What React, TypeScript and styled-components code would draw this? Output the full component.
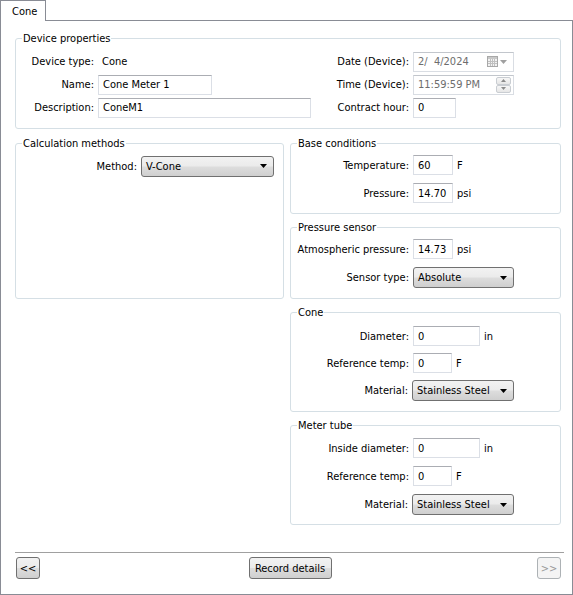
import React from 'react';
import styled, { createGlobalStyle } from 'styled-components';

const Global = createGlobalStyle`
  html, body { margin: 0; padding: 0; background: #fff; }
  body {
    font-family: "DejaVu Sans Condensed", "Liberation Sans", sans-serif;
    font-size: 11px;
    color: #000;
  }
  * { box-sizing: border-box; }
`;

const Window = styled.div`
  width: 573px;
  height: 595px;
  display: flex;
  flex-direction: column;
`;

const TabStrip = styled.div`
  display: flex;
  align-items: flex-end;
  height: 21px;
  flex: none;
`;

const Tab = styled.div`
  width: 46px;
  height: 21px;
  border: 1px solid #898c95;
  border-bottom: none;
  background: #fff;
  display: flex;
  align-items: center;
  padding-left: 11px;
  line-height: 13px;
`;

const TabFill = styled.div`
  flex: 1;
  height: 21px;
  border-bottom: 1px solid #898c95;
`;

const Panel = styled.div`
  flex: 1;
  border: 1px solid #898c95;
  border-top: none;
  padding: 11px 11px 0 14px;
  display: flex;
  flex-direction: column;
`;

const Group = styled.fieldset<{ $pt?: number; $pb?: number; $span?: number; $col?: number }>`
  margin: 0;
  min-width: 0;
  border: 1px solid #d5dfe5;
  border-radius: 3px;
  padding: ${p => p.$pt ?? 5}px 0 ${p => p.$pb ?? 10}px 0;
  grid-row: ${p => (p.$span ? `span ${p.$span}` : 'auto')};
  grid-column: ${p => p.$col ?? 'auto'};
`;

const Legend = styled.legend`
  margin-left: 6px;
  padding: 0 1px;
  line-height: 13px;
`;

const DeviceGrid = styled.div`
  display: grid;
  grid-template-columns: 78px 213px 1fr 101px;
  grid-auto-rows: 21px;
  column-gap: 4px;
  row-gap: 2px;
  padding-right: 46px;
  align-items: center;
`;

const Label = styled.span`
  text-align: right;
  white-space: nowrap;
  line-height: 13px;
`;

const Value = styled.span`
  padding-left: 4px;
  line-height: 13px;
`;

const TextInput = styled.input<{ $w: number }>`
  width: ${p => p.$w}px;
  height: 20px;
  margin: 0;
  padding: 0 4px;
  border: 1px solid #dbdfe6;
  border-top-color: #abadb3;
  font: inherit;
  color: #000;
  background: #fff;
  outline: none;
`;

const DisabledBox = styled.div`
  width: 101px;
  height: 20px;
  border: 1px solid #d9dde3;
  border-top-color: #c2c6cc;
  display: flex;
  align-items: center;
  padding: 0 2px 0 4px;
  color: #6d6d6d;
  background: #fff;
`;

const BoxText = styled.span`
  flex: 1;
  white-space: pre;
  line-height: 13px;
`;

const SpinCol = styled.div`
  width: 15px;
  height: 16px;
  display: flex;
  flex-direction: column;
`;

const SpinBtn = styled.div`
  flex: 1;
  border: 1px solid #c9cdd2;
  border-radius: 2px;
  background: linear-gradient(#f7f7f7, #e6e6e6);
  display: flex;
  align-items: center;
  justify-content: center;
`;

const MainGrid = styled.div`
  margin-top: 8px;
  display: grid;
  grid-template-columns: 269px 1fr;
  column-gap: 6px;
  row-gap: 7px;
  align-items: stretch;
`;

const Rows = styled.div<{ $gap: number }>`
  display: flex;
  flex-direction: column;
  gap: ${p => p.$gap}px;
`;

const Row = styled.div<{ $label: number; $h?: number }>`
  display: flex;
  align-items: center;
  height: ${p => p.$h ?? 20}px;
  & > ${Label} {
    width: ${p => p.$label}px;
    margin-right: 4px;
    flex: none;
  }
`;

const Unit = styled.span`
  margin-left: 4px;
  line-height: 13px;
`;

const Combo = styled.div<{ $w: number }>`
  width: ${p => p.$w}px;
  height: 21px;
  border: 1px solid #707070;
  border-radius: 3px;
  background: linear-gradient(#f2f2f2 0%, #ebebeb 48%, #dddddd 52%, #cfcfcf 100%);
  display: flex;
  align-items: center;
  padding: 0 6px 0 4px;
`;

const ComboText = styled.span`
  flex: 1;
  line-height: 13px;
  white-space: nowrap;
`;

const Footer = styled.div`
  margin-top: auto;
  margin-right: -3px;
`;

const Separator = styled.div`
  height: 1px;
  background: #a0a0a0;
`;

const ButtonBar = styled.div`
  display: grid;
  grid-template-columns: 1fr auto 1fr;
  align-items: center;
  padding: 4px 3px 15px 1px;
  & > :last-child {
    justify-self: end;
  }
`;

const Button = styled.button<{ $w: number; $disabled?: boolean; $shift?: number }>`
  width: ${p => p.$w}px;
  height: 22px;
  margin: 0 0 0 ${p => p.$shift ?? 0}px;
  padding: 0;
  font: inherit;
  border: 1px solid ${p => (p.$disabled ? '#adb2b5' : '#707070')};
  border-radius: 3px;
  color: ${p => (p.$disabled ? '#9a9a9a' : '#000')};
  background: ${p =>
    p.$disabled
      ? '#f4f4f4'
      : 'linear-gradient(#f2f2f2 0%, #ebebeb 48%, #dddddd 52%, #cfcfcf 100%)'};
  display: flex;
  align-items: center;
  justify-content: center;
`;

const Arrow = ({ color = '#000' }: { color?: string }) => (
  <svg width="7" height="4" viewBox="0 0 7 4">
    <polygon points="0,0 7,0 3.5,4" fill={color} />
  </svg>
);

const TinyArrow = ({ up }: { up?: boolean }) => (
  <svg width="5" height="3" viewBox="0 0 5 3">
    <polygon points={up ? '0,3 5,3 2.5,0' : '0,0 5,0 2.5,3'} fill="#8a8a8a" />
  </svg>
);

const CalendarIcon = () => (
  <svg width="11" height="11" viewBox="0 0 11 11">
    <rect x="0.5" y="0.5" width="10" height="10" fill="#f2f2f2" stroke="#a8a8a8" />
    <rect x="1" y="1" width="9" height="2" fill="#c8c8c8" />
    <path d="M1 5.5h9M1 7.5h9M3.5 3v7M5.5 3v7M7.5 3v7" stroke="#c0c0c0" strokeWidth="1" />
  </svg>
);

const DateArrow = styled.span`
  margin-left: 2px;
  margin-right: 4px;
  display: flex;
`;

function ComboBox({ w, text }: { w: number; text: string }) {
  return (
    <Combo $w={w}>
      <ComboText>{text}</ComboText>
      <Arrow />
    </Combo>
  );
}

export default function App() {
  return (
    <>
      <Global />
      <Window>
        <TabStrip>
          <Tab>Cone</Tab>
          <TabFill />
        </TabStrip>
        <Panel>
          <Group $pt={6} $pb={10}>
            <Legend>Device properties</Legend>
            <DeviceGrid>
              <Label>Device type:</Label>
              <Value>Cone</Value>
              <Label>Date (Device):</Label>
              <DisabledBox>
                <BoxText>{'2/  4/2024'}</BoxText>
                <CalendarIcon />
                <DateArrow>
                  <Arrow color="#a0a0a0" />
                </DateArrow>
              </DisabledBox>

              <Label>Name:</Label>
              <TextInput $w={114} defaultValue="Cone Meter 1" />
              <Label>Time (Device):</Label>
              <DisabledBox>
                <BoxText>11:59:59 PM</BoxText>
                <SpinCol>
                  <SpinBtn>
                    <TinyArrow up />
                  </SpinBtn>
                  <SpinBtn>
                    <TinyArrow />
                  </SpinBtn>
                </SpinCol>
              </DisabledBox>

              <Label>Description:</Label>
              <TextInput $w={213} defaultValue="ConeM1" />
              <Label>Contract hour:</Label>
              <TextInput $w={43} defaultValue="0" />
            </DeviceGrid>
          </Group>

          <MainGrid>
            <Group $span={2} $col={1}>
              <Legend>Calculation methods</Legend>
              <Rows $gap={7}>
                <Row $label={121} $h={22}>
                  <Label>Method:</Label>
                  <ComboBox w={133} text="V-Cone" />
                </Row>
              </Rows>
            </Group>

            <Group $pb={10} $col={2}>
              <Legend>Base conditions</Legend>
              <Rows $gap={8}>
                <Row $label={118}>
                  <Label>Temperature:</Label>
                  <TextInput $w={40} defaultValue="60" />
                  <Unit>F</Unit>
                </Row>
                <Row $label={118}>
                  <Label>Pressure:</Label>
                  <TextInput $w={40} defaultValue="14.70" />
                  <Unit>psi</Unit>
                </Row>
              </Rows>
            </Group>

            <Group $pb={10} $col={2}>
              <Legend>Pressure sensor</Legend>
              <Rows $gap={8}>
                <Row $label={118}>
                  <Label>Atmospheric pressure:</Label>
                  <TextInput $w={40} defaultValue="14.73" />
                  <Unit>psi</Unit>
                </Row>
                <Row $label={118} $h={21}>
                  <Label>Sensor type:</Label>
                  <ComboBox w={101} text="Absolute" />
                </Row>
              </Rows>
            </Group>

            <Group $pt={7} $pb={10} $col={2}>
              <Legend>Cone</Legend>
              <Rows $gap={7}>
                <Row $label={118}>
                  <Label>Diameter:</Label>
                  <TextInput $w={67} defaultValue="0" />
                  <Unit>in</Unit>
                </Row>
                <Row $label={118}>
                  <Label>Reference temp:</Label>
                  <TextInput $w={39} defaultValue="0" />
                  <Unit>F</Unit>
                </Row>
                <Row $label={117} $h={21}>
                  <Label>Material:</Label>
                  <ComboBox w={102} text="Stainless Steel" />
                </Row>
              </Rows>
            </Group>

            <Group $pt={6} $pb={9} $col={2}>
              <Legend>Meter tube</Legend>
              <Rows $gap={8}>
                <Row $label={118}>
                  <Label>Inside diameter:</Label>
                  <TextInput $w={67} defaultValue="0" />
                  <Unit>in</Unit>
                </Row>
                <Row $label={118}>
                  <Label>Reference temp:</Label>
                  <TextInput $w={39} defaultValue="0" />
                  <Unit>F</Unit>
                </Row>
                <Row $label={117} $h={21}>
                  <Label>Material:</Label>
                  <ComboBox w={102} text="Stainless Steel" />
                </Row>
              </Rows>
            </Group>
          </MainGrid>

          <Footer>
            <Separator />
            <ButtonBar>
              <Button $w={24}>{'<<'}</Button>
              <Button $w={83} $shift={3}>
                Record details
              </Button>
              <Button $w={24} $disabled>
                {'>>'}
              </Button>
            </ButtonBar>
          </Footer>
        </Panel>
      </Window>
    </>
  );
}
